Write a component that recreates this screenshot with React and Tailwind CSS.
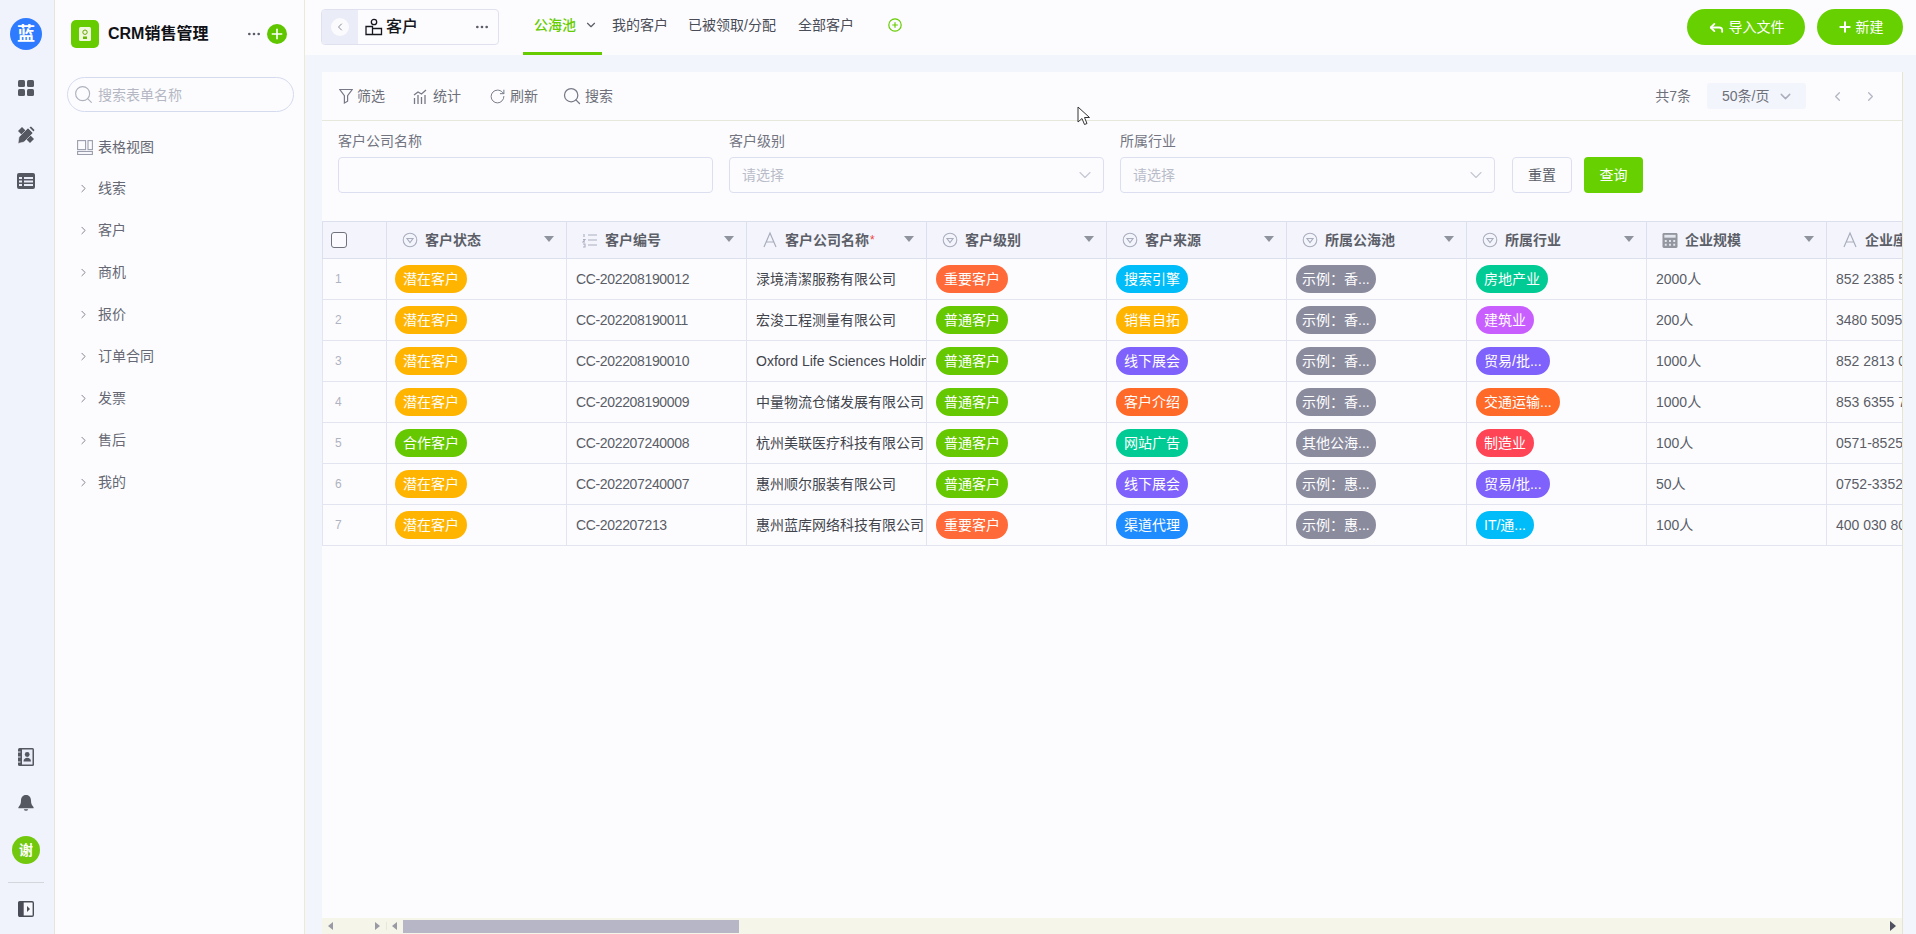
import React from "react";
import { Search, ChevronRight, ChevronLeft, ChevronDown, MoreHorizontal, Plus, RotateCw, Reply } from "lucide-react";

const FONT = "font-['Liberation_Sans','Noto_Sans_CJK_SC',sans-serif]";

const C = {
  yellow: "bg-[#ffb400]",
  red: "bg-[#ff6a38]",
  green: "bg-[#66c800]",
  cyan: "bg-[#00bcf8]",
  gray: "bg-[#8b8b9e]",
  teal: "bg-[#00cb94]",
  violet: "bg-[#c95eff]",
  purple: "bg-[#7f62fb]",
  orange: "bg-[#ff6a28]",
  pink: "bg-[#ff4455]",
  blue: "bg-[#1e8cff]",
};

const rows = [
  ["潜在客户", "yellow", "CC-202208190012", "渌境清潔服務有限公司", "重要客户", "red", "搜索引擎", "cyan", "示例：香...", "房地产业", "teal", "2000人", "852 2385 5100"],
  ["潜在客户", "yellow", "CC-202208190011", "宏浚工程测量有限公司", "普通客户", "green", "销售自拓", "yellow", "示例：香...", "建筑业", "violet", "200人", "3480 5095 12"],
  ["潜在客户", "yellow", "CC-202208190010", "Oxford Life Sciences Holdings", "普通客户", "green", "线下展会", "purple", "示例：香...", "贸易/批...", "purple", "1000人", "852 2813 0100"],
  ["潜在客户", "yellow", "CC-202208190009", "中量物流仓储发展有限公司", "普通客户", "green", "客户介绍", "orange", "示例：香...", "交通运输...", "orange", "1000人", "853 6355 7100"],
  ["合作客户", "green", "CC-202207240008", "杭州美联医疗科技有限公司", "普通客户", "green", "网站广告", "teal", "其他公海...", "制造业", "pink", "100人", "0571-85251000"],
  ["潜在客户", "yellow", "CC-202207240007", "惠州顺尔服装有限公司", "普通客户", "green", "线下展会", "purple", "示例：惠...", "贸易/批...", "purple", "50人", "0752-33521000"],
  ["潜在客户", "yellow", "CC-202207213", "惠州蓝库网络科技有限公司", "重要客户", "red", "渠道代理", "blue", "示例：惠...", "IT/通...", "cyan", "100人", "400 030 8000"],
];

function Pill({ color, tight, children }) {
  return (
    <span className={`inline-flex h-7 items-center whitespace-nowrap rounded-[14px] text-sm text-white ${tight ? "px-[6px]" : "px-2"} ${C[color]}`}>
      {children}
    </span>
  );
}

function SelectIcon() {
  return (
    <svg width="16" height="16" viewBox="0 0 16 16" fill="none" stroke="#a9adbc" strokeWidth="1.1">
      <circle cx="8" cy="8" r="6.8" />
      <path d="M5 6.5h6L8 10.5z" />
    </svg>
  );
}
function NumberIcon() {
  return (
    <svg width="16" height="16" viewBox="0 0 16 16" fill="none" stroke="#a9adbc" strokeWidth="1.1">
      <path d="M6 3h9M6 8h9M6 13h9M2 2v3M1 7.5h2L1 10h2M1 12h2v3H1" />
    </svg>
  );
}
function TextIcon() {
  return (
    <svg width="16" height="18" viewBox="0 0 16 18" fill="none" stroke="#a9adbc" strokeWidth="1.2">
      <path d="M2 16 8 2l6 14M4.5 11h7" />
    </svg>
  );
}
function CalcIcon() {
  return (
    <svg width="17" height="17" viewBox="0 0 17 17">
      <rect x="0.5" y="0.5" width="16" height="16" rx="1.5" fill="#94969f" />
      <rect x="2.5" y="2.5" width="12" height="3" fill="#e4e6ee" />
      <path d="M3 8h2v2H3zM7.500 8h2v2h-2zM12 8h2v2h-2zM3 12h2v2H3zM7.500 12h2v2h-2zM12 12h2v2h-2z" fill="#e4e6ee" />
    </svg>
  );
}

const headers = [
  [SelectIcon, "客户状态"],
  [NumberIcon, "客户编号"],
  [TextIcon, "客户公司名称", true],
  [SelectIcon, "客户级别"],
  [SelectIcon, "客户来源"],
  [SelectIcon, "所属公海池"],
  [SelectIcon, "所属行业"],
  [CalcIcon, "企业规模"],
  [TextIcon, "企业座机"],
];

const cols = "grid grid-cols-[65px_repeat(9,180px)]";

function Table() {
  return (
    <div className="relative min-h-0 flex-1 overflow-hidden">
      <div className={`${cols} h-[38px] w-max border-y border-[#dcdfec] bg-[#f4f5fc]`}>
        <div className="flex items-center border-x border-[#dcdfec] pl-2">
          <span className="h-4 w-4 rounded-[3px] border border-[#70727d] bg-[#fbfbff]" />
        </div>
        {headers.map(([Icon, label, req]) => (
          <div key={label} className="relative flex items-center border-r border-[#dcdfec] pl-[15px]">
            <span className="flex w-4 justify-center"><Icon /></span>
            <span className="ml-[7px] whitespace-nowrap text-sm font-semibold text-[#5c5f68]">{label}</span>
            {req && <span className="ml-px text-xs text-[#f04444]">*</span>}
            <span className="absolute right-[12px] top-[14px] h-0 w-0 border-x-[5px] border-t-[6px] border-x-transparent border-t-[#8f939d]" />
          </div>
        ))}
      </div>
      {rows.map((r, i) => (
        <div key={i} className={`${cols} h-[41px] w-max border-b border-[#e2e4ef]`}>
          <div className="flex items-center border-x border-[#e2e4ef] pl-[12px] text-xs text-[#b0b3c0]">{i + 1}</div>
          <Cell first><Pill color={r[1]}>{r[0]}</Pill></Cell>
          <Cell text narrow>{r[2]}</Cell>
          <Cell text dark>{r[3]}</Cell>
          <Cell><Pill color={r[5]}>{r[4]}</Pill></Cell>
          <Cell><Pill color={r[7]}>{r[6]}</Pill></Cell>
          <Cell><Pill color="gray" tight>{r[8]}</Pill></Cell>
          <Cell><Pill color={r[10]}>{r[9]}</Pill></Cell>
          <Cell text>{r[11]}</Cell>
          <Cell text>{r[12]}</Cell>
        </div>
      ))}
      <div className="absolute bottom-0 left-0 right-0 flex h-4 items-center bg-[#f5f5ea]">
        <div className="flex w-[65px] items-center justify-between border-r border-[#e8e8d8] pl-[6px] pr-[6px]">
          <span className="h-0 w-0 border-y-[4px] border-r-[5px] border-y-transparent border-r-[#9a9aa6]" />
          <span className="h-0 w-0 border-y-[4px] border-l-[5px] border-y-transparent border-l-[#9a9aa6]" />
        </div>
        <span className="ml-[5px] h-0 w-0 border-y-[4px] border-r-[5px] border-y-transparent border-r-[#9a9aa6]" />
        <div className="ml-[6px] h-[13px] w-[336px] bg-[#b6b6c6]" />
        <div className="flex-1" />
        <span className="mr-[6px] h-0 w-0 border-y-[5px] border-l-[6px] border-y-transparent border-l-[#4f5060]" />
      </div>
    </div>
  );
}

function Cell({ children, text, dark, narrow, first }) {
  return (
    <div
      className={`flex items-center overflow-hidden whitespace-nowrap border-r border-[#e2e4ef] text-sm ${first ? "pl-2" : "pl-[9px]"} ${
        text ? (dark ? "text-[#42444c]" : "text-[#5a5c66]") : ""
      } ${narrow ? "tracking-[-0.35px]" : ""}`}
    >
      {children}
    </div>
  );
}

function Rail() {
  return (
    <div className="flex w-[55px] shrink-0 flex-col items-center border-r border-[#e6e6d8] bg-[#f1f3fc] pr-[2px] pt-[18px]">
      <div className="flex h-8 w-8 items-center justify-center rounded-full bg-[#2f7bff] text-lg font-bold text-white">蓝</div>
      <svg className="mt-[30px]" width="16" height="16" viewBox="0 0 16 16" fill="#555761">
        <rect x="0" y="0" width="7" height="7" rx="1.5" /><rect x="9" y="0" width="7" height="7" rx="1.5" />
        <rect x="0" y="9" width="7" height="7" rx="1.5" /><rect x="9" y="9" width="7" height="7" rx="1.5" />
      </svg>
      <svg className="mt-[30px]" width="18" height="18" viewBox="0 0 18 18" fill="#555761">
        <path d="M1 5l4-4 12 12-4 4z" />
        <path d="M1 17.500l1-6.500L11 2l5 5-9 9z" stroke="#f1f3fc" strokeWidth="0.6" />
        <path d="M12.500 1.500l1.500-1 3.500 3.500-1 1.500z" />
      </svg>
      <svg className="mt-[29px]" width="18" height="16" viewBox="0 0 18 16">
        <rect x="0" y="0" width="18" height="16" rx="2" fill="#555761" />
        <path d="M2 4h3v2H2zM2 7.500h3v2H2zM7 4h9v2H7zM7 7.500h9v2H7zM2 11h3v2H2zM7 11h9v2H7z" fill="#e9edf8" />
      </svg>
      <div className="flex-1" />
      <svg width="16" height="18" viewBox="0 0 16 18">
        <rect x="0" y="0" width="16" height="18" rx="1.5" fill="#555761" />
        <rect x="4" y="1.5" width="10.5" height="15" fill="#e9edf8" />
        <circle cx="9.2" cy="6.5" r="2.4" fill="#555761" />
        <path d="M5.5 13.5c0-5 7.5-5 7.5 0z" fill="#555761" />
        <path d="M0 4h2.500M0 9h2.500M0 14h2.500" stroke="#e9edf8" />
      </svg>
      <svg className="mt-[28px]" width="18" height="19" viewBox="0 0 18 19" fill="#555761">
        <path d="M9 1c-3.400 0-5 2.600-5 5.600 0 3.400-1 5-2.600 6.600v1h15.200v-1c-1.600-1.600-2.600-3.200-2.600-6.600C14 3.600 12.400 1 9 1z" />
        <path d="M6.800 15.200a2.300 2.300 0 0 0 4.400 0z" />
      </svg>
      <div className="mt-[23px] flex h-7 w-7 items-center justify-center rounded-full bg-[#72c80c] text-sm font-semibold text-white">谢</div>
      <div className="mt-[18px] h-px w-9 bg-[#d5d6dc]" />
      <svg className="mb-[17px] mt-[18px]" width="16" height="16" viewBox="0 0 16 16">
        <rect x="0.7" y="0.7" width="14.6" height="14.6" rx="1.2" fill="#f7f8fd" stroke="#4a4c56" strokeWidth="1.4" />
        <rect x="0.7" y="0.7" width="5" height="14.6" fill="#4a4c56" />
        <path d="M9 5l3 3-3 3z" fill="#4a4c56" />
      </svg>
    </div>
  );
}

const menu = ["线索", "客户", "商机", "报价", "订单合同", "发票", "售后", "我的"];

function Sidebar() {
  return (
    <div className="flex w-[250px] shrink-0 flex-col border-r border-[#ece9d4] bg-[#fcfcff]">
      <div className="flex h-[68px] shrink-0 items-center pl-4">
        <div className="flex h-7 w-7 items-center justify-center rounded-[5px] bg-[#66cc00]">
          <svg width="12" height="14" viewBox="0 0 12 14">
            <rect width="12" height="14" rx="1.5" fill="#f0f7df" />
            <circle cx="6" cy="5.2" r="2.2" fill="none" stroke="#66a800" strokeWidth="1" />
            <rect x="4" y="9.5" width="4" height="2.5" fill="#66b800" />
          </svg>
        </div>
        <span className="ml-[9px] whitespace-nowrap text-base font-bold text-[#111217]">CRM销售管理</span>
        <MoreHorizontal className="ml-[38px]" size={16} color="#5a5c66" />
        <span className="ml-[5px] flex h-5 w-5 items-center justify-center rounded-full bg-[#5fc600]">
          <Plus size={16} color="#fff" strokeWidth={2.4} />
        </span>
      </div>
      <div className="mx-3 mt-[9px] flex h-[35px] w-[227px] items-center rounded-full border border-[#d5dbee] pl-[5px]">
        <Search size={21} color="#aeb2bd" strokeWidth={1.3} />
        <span className="ml-[4px] text-sm text-[#b5b8c3]">搜索表单名称</span>
      </div>
      <div className="mt-[17px] flex h-[36px] items-center pl-[22px]">
        <svg width="16" height="15" viewBox="0 0 16 15" fill="none" stroke="#9a9dac" strokeWidth="1.1">
          <rect x="0.6" y="0.6" width="8" height="9" />
          <rect x="11" y="0.6" width="4.4" height="9" />
          <rect x="0.6" y="11.5" width="14.8" height="3" />
        </svg>
        <span className="ml-[5px] text-sm text-[#666873]">表格视图</span>
      </div>
      <div className="mt-[2px] flex flex-col">
        {menu.map((m) => (
          <div key={m} className="flex h-[42px] items-center pl-[22px]">
            <ChevronRight size={13} color="#70727e" strokeWidth={1.6} />
            <span className="ml-[8px] text-sm text-[#666873]">{m}</span>
          </div>
        ))}
      </div>
    </div>
  );
}

function TopBar() {
  return (
    <div className="flex h-[55px] shrink-0 items-start bg-[#fcfcff]">
      <div className="ml-[16px] mt-[9px] flex h-9 w-[178px] items-center rounded-[4px] border border-[#dfe2ee] bg-[#fcfcff]">
        <div className="flex h-full w-9 items-center justify-center rounded-l-[4px] bg-[#eaecf8]">
          <span className="flex h-[18px] w-[18px] items-center justify-center rounded-full bg-[#fbfbfd]">
            <ChevronLeft size={12} color="#8a8c98" />
          </span>
        </div>
        <svg className="ml-[7px]" width="18" height="18" viewBox="0 0 18 18" fill="none" stroke="#17181d" strokeWidth="1.3">
          <circle cx="9" cy="4" r="2.7" />
          <path d="M1 8.500h6.500v8H1zM7.500 10.500h9v6h-9z" />
        </svg>
        <span className="ml-[3px] text-base font-medium text-[#17181d]">客户</span>
        <MoreHorizontal className="ml-[56px]" size={16} color="#5a5c66" />
      </div>
      <div className="relative ml-[24px] flex h-full w-[79px] items-center justify-start pb-[6px] pl-[11px] text-sm font-medium text-[#66cc00]">
        公海池
        <ChevronDown size={14} color="#5a5c66" className="ml-[8px]" />
        <span className="absolute bottom-0 left-0 right-0 h-[3px] bg-[#66cc00]" />
      </div>
      <div className="ml-[10px] flex h-full items-center pb-[6px] text-sm text-[#4a4c56]">我的客户</div>
      <div className="ml-[20px] flex h-full items-center pb-[6px] text-sm text-[#4a4c56]">已被领取/分配</div>
      <div className="ml-[22px] flex h-full items-center pb-[6px] text-sm text-[#4a4c56]">全部客户</div>
      <div className="ml-[34px] flex h-full items-center pb-[6px]">
        <svg width="14" height="14" viewBox="0 0 14 14" fill="none" stroke="#66cc00" strokeWidth="1.2">
          <circle cx="7" cy="7" r="6.2" /><path d="M7 4.200v5.600M4.200 7h5.600" />
        </svg>
      </div>
      <div className="flex-1" />
      <button className="mt-[9px] flex h-9 w-[118px] items-center justify-center gap-[4px] rounded-full bg-[#66d000] text-sm text-white">
        <Reply size={17} strokeWidth={2.6} />导入文件
      </button>
      <button className="ml-3 mr-[13px] mt-[9px] flex h-9 w-[86px] items-center justify-center gap-[3px] rounded-full bg-[#66d000] text-sm text-white">
        <Plus size={16} strokeWidth={3} />新建
      </button>
    </div>
  );
}

function Toolbar() {
  const gray = "#777a86";
  return (
    <div className="flex h-[49px] shrink-0 items-center border-b border-[#e5e8da] pl-[17px] text-sm text-[#6e7079]">
      <div className="flex items-center">
        <svg width="14" height="16" viewBox="0 0 14 16" fill="none" stroke={gray} strokeWidth="1.2">
          <path d="M.8 1.500h12.400L8.600 7.600v5.600L5.400 15V7.600z" />
        </svg>
        <span className="ml-[4px]">筛选</span>
      </div>
      <div className="ml-[28px] flex items-center">
        <svg width="15" height="15" viewBox="0 0 15 15" fill="none" stroke={gray} strokeWidth="1.3">
          <path d="M1.500 15V9M5 15V6M8.500 15V8M12 15V6M1 6l4-3 3.500 2L13 1" />
        </svg>
        <span className="ml-[5px]">统计</span>
      </div>
      <div className="ml-[28px] flex items-center">
        <RotateCw size={17} color={gray} strokeWidth={1.4} />
        <span className="ml-[4px]">刷新</span>
      </div>
      <div className="ml-[24px] flex items-center">
        <Search size={20} color={gray} strokeWidth={1.5} />
        <span className="ml-[3px]">搜索</span>
      </div>
      <div className="flex-1" />
      <span className="text-sm text-[#6e7079]">共7条</span>
      <div className="ml-[16px] flex h-[26px] w-[99px] items-center rounded-[3px] bg-[#f3f5fc] pl-[15px] text-sm text-[#6e7079]">
        50条/页
        <ChevronDown size={17} color="#a9adbc" className="ml-[8px]" />
      </div>
      <ChevronLeft size={15} color="#b3b6c4" className="ml-[24px]" />
      <ChevronRight size={15} color="#b3b6c4" className="ml-[18px] mr-[24px]" />
    </div>
  );
}

function SelectBox({ label }) {
  return (
    <div className="w-[375px]">
      <div className="h-[21px] text-sm leading-[21px] text-[#72747f]">{label}</div>
      <div className="mt-[5px] flex h-9 items-center justify-between rounded-[4px] border border-[#dcdff0] pl-[12px] pr-[8px] text-sm text-[#b9bcc8]">
        请选择
        <ChevronDown size={20} color="#c4c7d2" strokeWidth={1.3} />
      </div>
    </div>
  );
}

function Filters() {
  return (
    <div className="flex h-[100px] shrink-0 items-start pl-[16px] pt-[10px]">
      <div className="w-[375px]">
        <div className="h-[21px] text-sm leading-[21px] text-[#72747f]">客户公司名称</div>
        <div className="mt-[5px] h-9 rounded-[4px] border border-[#dcdff0]" />
      </div>
      <div className="ml-[16px]"><SelectBox label="客户级别" /></div>
      <div className="ml-[16px]"><SelectBox label="所属行业" /></div>
      <button className="ml-[17px] mt-[26px] h-9 w-[60px] rounded-[4px] border border-[#dcdff0] text-sm text-[#5a5c66]">重置</button>
      <button className="ml-[12px] mt-[26px] h-9 w-[59px] rounded-[4px] bg-[#66d000] text-sm text-white">查询</button>
    </div>
  );
}

export default function App() {
  return (
    <div className={`${FONT} relative flex h-[934px] w-[1916px] overflow-hidden bg-[#f3f5fc]`}>
      <Rail />
      <Sidebar />
      <div className="flex min-w-0 flex-1 flex-col">
        <TopBar />
        <div className="ml-[17px] mr-[13px] mt-[17px] flex min-h-0 flex-1 flex-col overflow-hidden border-r border-[#e6e5cf] bg-[#fcfcff]">
          <Toolbar />
          <Filters />
          <Table />
        </div>
      </div>
      <svg className="absolute left-[1077px] top-[106px]" width="14" height="20" viewBox="0 0 14 20">
        <path d="M1 1v15l4-3.500 2.500 6 2.500-1-2.500-6h5z" fill="#fff" stroke="#333" strokeWidth="1" />
      </svg>
    </div>
  );
}
